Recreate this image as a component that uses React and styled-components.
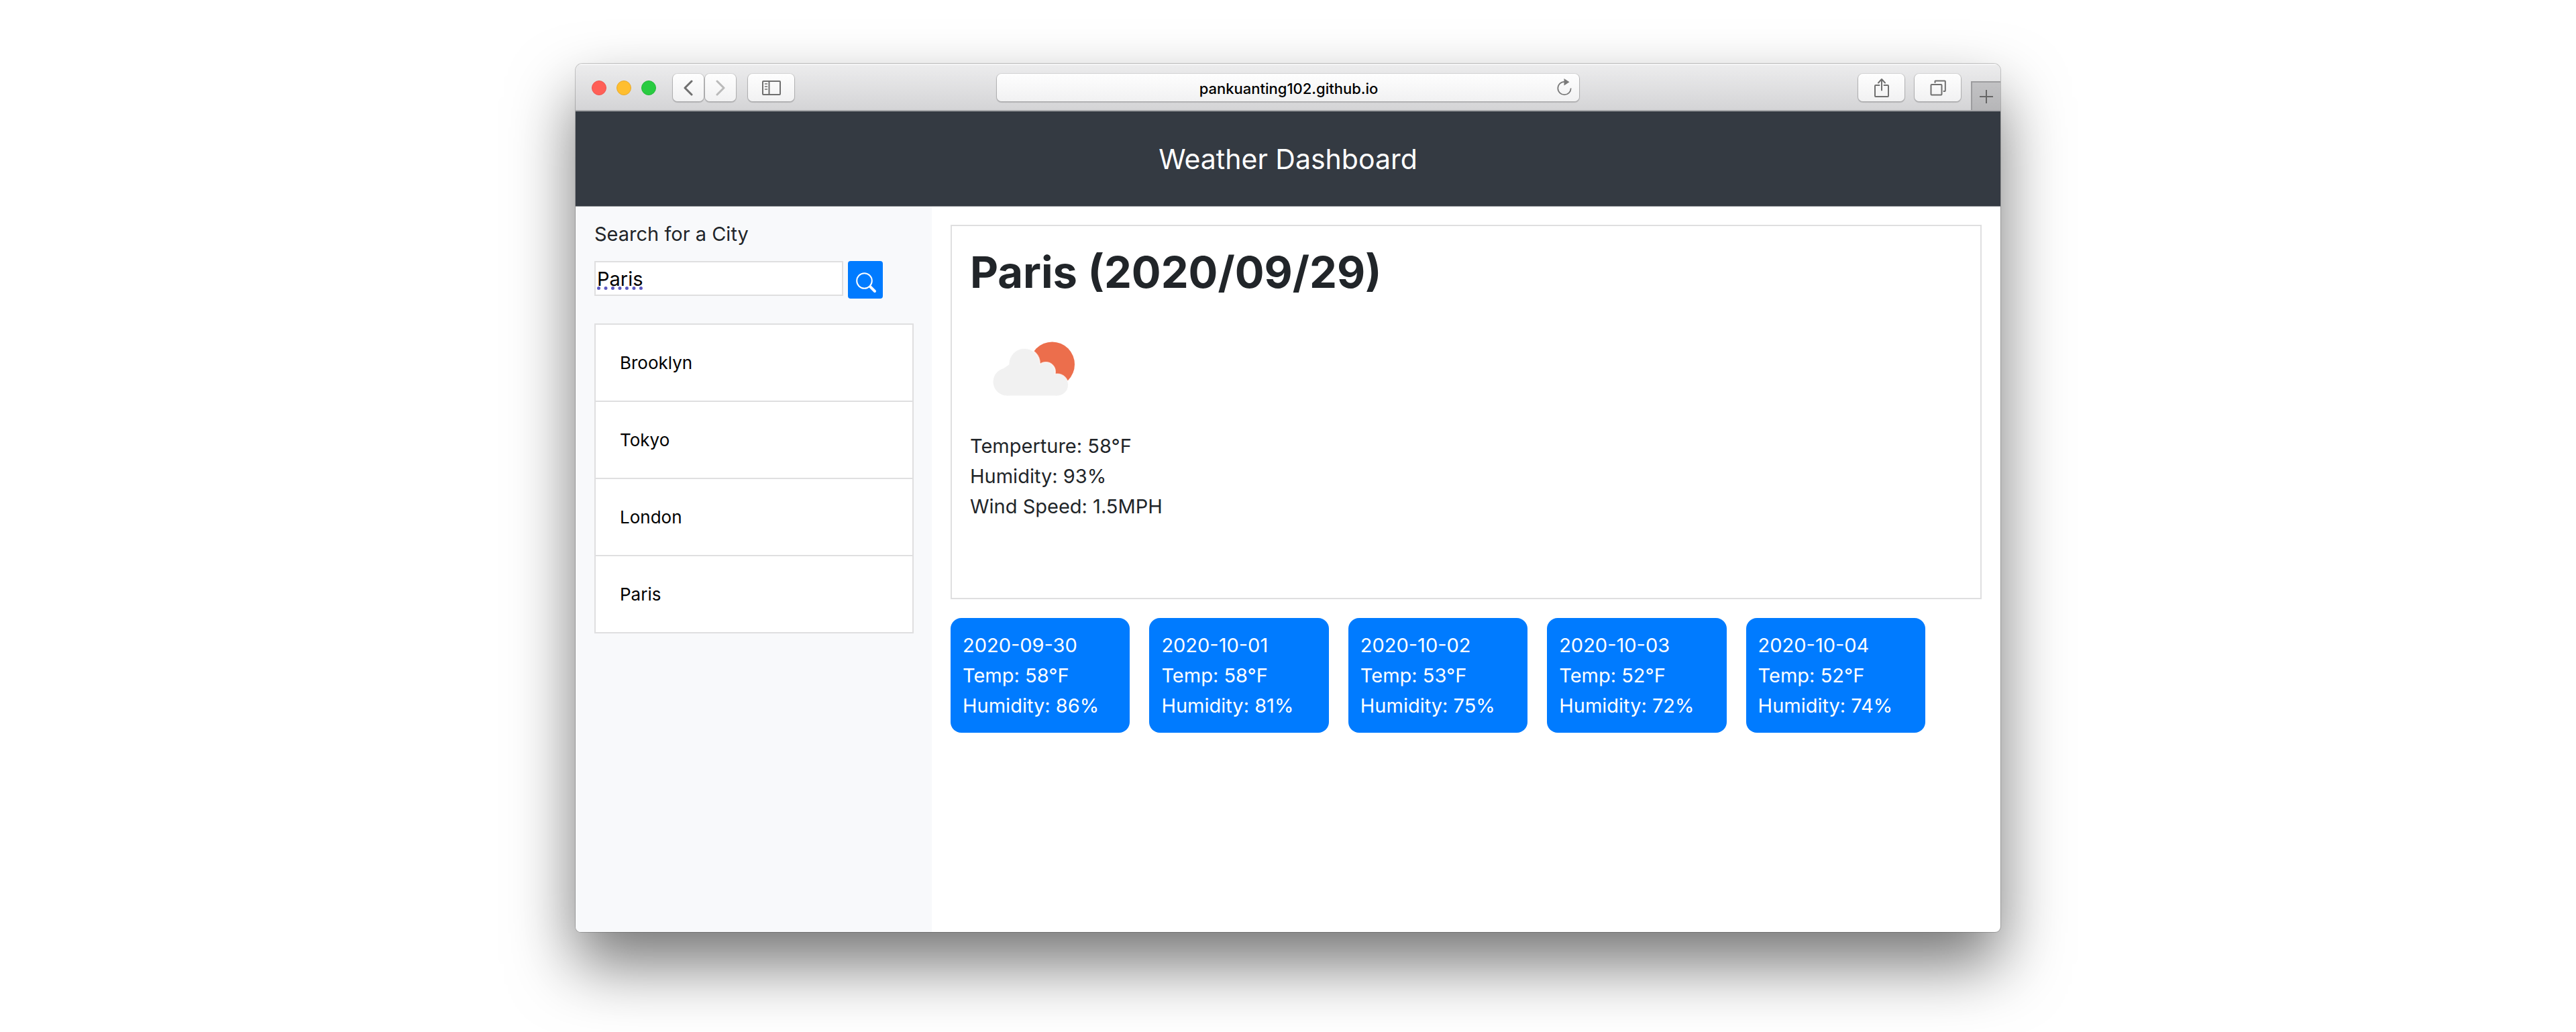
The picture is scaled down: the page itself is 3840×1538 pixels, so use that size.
import React, { useState } from "react";
import styled, { createGlobalStyle } from "styled-components";

const GlobalStyle = createGlobalStyle`
  *, *::before, *::after { box-sizing: border-box; }
  body {
    margin: 0;
    background: #fff;
    color: #212529;
    font-family: Inter, "Liberation Sans", sans-serif;
    font-size: 29px;
    line-height: 45px;
  }
  button, input { font: inherit; color: inherit; margin: 0; }
`;

const Page = styled.div`
  display: flex;
  flex-direction: column;
  align-items: center;
  min-height: 100vh;
  padding: 95px 40px 149px;
`;

const BrowserWindow = styled.div`
  display: flex;
  flex-direction: column;
  flex: 1;
  width: 100%;
  max-width: 2124px;
  border-radius: 10px 10px 8px 8px;
  overflow: hidden;
  background: #fff;
  box-shadow: 0 0 0 1px rgba(0, 0, 0, 0.2), 0 48px 96px rgba(0, 0, 0, 0.54);
`;

/* ---------- browser chrome ---------- */

const Toolbar = styled.div`
  display: grid;
  grid-template-columns: 1fr minmax(300px, 868px) 1fr;
  height: 71px;
  background: linear-gradient(#ececed, #d4d4d6);
  border-top: 2px solid #f4f4f5;
  border-bottom: 2px solid #a3a4a7;
`;

const ToolbarSide = styled.div`
  display: flex;
  align-items: center;
  justify-content: ${(p) => (p.$end ? "flex-end" : "flex-start")};
  gap: ${(p) => (p.$end ? "15px" : "18px")};
  padding-left: 24px;
`;

const TrafficLights = styled.div`
  display: flex;
  gap: 15px;
  margin-right: 7px;
`;

const Light = styled.span`
  width: 22px;
  height: 22px;
  border-radius: 50%;
  background: ${(p) => p.$fill};
  border: 1px solid ${(p) => p.$edge};
`;

const NavPair = styled.div`
  display: flex;
  gap: 2px;
`;

const ToolButton = styled.button`
  display: flex;
  align-items: center;
  justify-content: center;
  width: ${(p) => (p.$narrow ? "46px" : "69px")};
  height: 41px;
  padding: 0;
  border: 0;
  border-radius: 7px;
  background: linear-gradient(#fefefe, #f1f1f2);
  box-shadow: 0 0 0 1px rgba(0, 0, 0, 0.07), 0 1px 1px 1px rgba(0, 0, 0, 0.16);
  color: ${(p) => (p.$faded ? "#bababa" : "#6f6f6f")};
`;

const AddressBar = styled.div`
  display: grid;
  grid-template-columns: 34px 1fr 34px;
  align-items: center;
  align-self: center;
  height: 41px;
  border-radius: 7px;
  background: linear-gradient(#fefefe, #f1f1f2);
  box-shadow: 0 0 0 1px rgba(0, 0, 0, 0.07), 0 1px 1px 1px rgba(0, 0, 0, 0.16);
`;

const AddressInput = styled.input`
  grid-column: 2;
  min-width: 0;
  height: 41px;
  padding: 2px 0 0 2px;
  border: 0;
  outline: 0;
  background: transparent;
  color: #000;
  font-size: 22px;
  font-weight: 500;
  line-height: 30px;
  text-align: center;
`;

const ReloadButton = styled.button`
  display: flex;
  width: 24px;
  height: 30px;
  padding: 0;
  border: 0;
  background: none;
  color: #7a7a7a;
`;

const NewTab = styled.button`
  display: flex;
  align-items: center;
  justify-content: center;
  align-self: flex-end;
  width: 44px;
  height: 43px;
  padding: 0;
  border: solid #9c9c9e;
  border-width: 2px 0 0 2px;
  background: linear-gradient(#c2c2c4, #b6b6b8);
  color: #666;
`;

/* ---------- dashboard ---------- */

const Header = styled.header`
  display: flex;
  align-items: center;
  justify-content: center;
  height: 142px;
  background: #343a42;
  border-bottom: 1px solid #8f9396;
  color: #fff;
`;

const SiteTitle = styled.h1`
  margin: 0;
  font-size: 41px;
  font-weight: 400;
  line-height: 60px;
`;

const Body = styled.div`
  display: grid;
  grid-template-columns: 1fr 3fr;
  flex: 1;
`;

const Sidebar = styled.aside`
  padding: 18px 27px 28px 28px;
  background: #f8f9fb;
`;

const SearchForm = styled.form`
  display: grid;
  grid-template-columns: minmax(0, 371px) 52px;
  align-items: start;
  column-gap: 7px;
  row-gap: 18px;
`;

const SearchLabel = styled.label`
  grid-column: 1 / -1;
`;

const SearchInput = styled.input`
  width: 100%;
  height: 52px;
  padding: 0 2px;
  border: 2px solid #dfdfe0;
  border-radius: 0;
  outline: 0;
  background: #fff;
  color: #000;
  text-decoration: underline dotted 5px #5a58c0;
  text-decoration-skip-ink: none;
  text-underline-offset: 1px;
`;

const SearchButton = styled.button`
  display: flex;
  align-items: center;
  justify-content: center;
  height: 56px;
  padding: 8px 0 0 2px;
  border: 0;
  border-radius: 4px;
  background: #007bff;
  color: #fff;
`;

const CityList = styled.ul`
  margin: 37px 0 0;
  padding: 0;
  list-style: none;
  border: solid #dfdfe0;
  border-width: 2px 2px 0;
`;

const CityButton = styled.button`
  display: block;
  width: 100%;
  padding: 35px 36px 34px;
  border: 0;
  border-bottom: 2px solid #dfdfe0;
  background: #fff;
  color: #000;
  font-size: 26px;
  line-height: 44px;
  text-align: left;
`;

const Main = styled.main`
  display: flex;
  flex-direction: column;
  gap: 28px;
  padding: 27px 28px;
`;

const CurrentPanel = styled.section`
  min-height: 558px;
  padding: 29px 27px;
  border: 2px solid #dfdfe0;
`;

const CurrentTitle = styled.h2`
  margin: 0;
  font-size: 65px;
  font-weight: 700;
  line-height: 80px;
`;

const WeatherIcon = styled.svg`
  display: block;
  width: 185px;
  height: 185px;
  margin-bottom: 11px;
`;

const Reading = styled.p`
  margin: 0;
`;

const Forecast = styled.section`
  display: grid;
  grid-template-columns: repeat(5, 1fr);
  gap: 29px;
  padding-right: 84px;
`;

const DayCard = styled.article`
  padding: 18px;
  border-radius: 16px;
  background: #007bff;
  color: #fff;
`;

/* ---------- icons ---------- */

const Stroke = ({ w, h, sw = 2, children }) => (
  <svg
    width={w}
    height={h}
    viewBox={`0 0 ${w} ${h}`}
    fill="none"
    stroke="currentColor"
    strokeWidth={sw}
    strokeLinecap="round"
    strokeLinejoin="round"
    aria-hidden="true"
  >
    {children}
  </svg>
);

const BackIcon = () => (
  <Stroke w={16} h={24} sw={3}>
    <path d="M13 2 L3 12 L13 22" />
  </Stroke>
);

const ForwardIcon = () => (
  <Stroke w={16} h={24} sw={3}>
    <path d="M3 2 L13 12 L3 22" />
  </Stroke>
);

const SidebarIcon = () => (
  <Stroke w={28} h={22}>
    <rect x="1" y="1" width="26" height="20" rx="1" />
    <path d="M10.5 1 V21" />
    <path d="M4.5 5 H7.5 M4.5 9 H7.5 M4.5 13 H7.5" strokeWidth="1.6" />
  </Stroke>
);

const ShareIcon = () => (
  <Stroke w={22} h={30}>
    <path d="M7.5 11 H2 Q1 11 1 12 V27 Q1 28 2 28 H20 Q21 28 21 27 V12 Q21 11 20 11 H14.5" />
    <path d="M11 18.5 V2.5 M6 7.5 L11 2 L16 7.5" />
  </Stroke>
);

const TabsIcon = () => (
  <Stroke w={24} h={24}>
    <rect x="1.5" y="7" width="16" height="15.5" rx="1" />
    <path d="M7.5 4 V2 Q7.5 1.5 8 1.5 H22 Q22.8 1.5 22.8 2.3 V16 Q22.8 17 22 17 H20.5" />
  </Stroke>
);

const PlusIcon = () => (
  <Stroke w={22} h={22} sw={2}>
    <path d="M11 1 V21 M1 11 H21" strokeLinecap="butt" />
  </Stroke>
);

const ReloadIcon = () => (
  <Stroke w={24} h={30} sw={1.8}>
    <path d="M21.7 15.5 A9.7 9.7 0 1 1 12 5.8" strokeLinecap="butt" />
    <path d="M11.5 1 L19.5 6.2 L11.5 11.6 Z" fill="currentColor" stroke="none" />
  </Stroke>
);

const SearchIcon = () => (
  <Stroke w={32} h={32}>
    <circle cx="13.5" cy="13.5" r="11.3" />
    <path d="M22.5 22.5 L29 29" strokeWidth="4" />
  </Stroke>
);

const FewClouds = () => (
  <WeatherIcon viewBox="0 0 185 185" role="img" aria-label="Few clouds">
    <circle cx="122.500" cy="97" r="33.500" fill="#ec6e4c" />
    <g stroke="#fff" strokeOpacity="0.75" strokeWidth="2">
      <circle cx="81" cy="96" r="23" fill="#f1f1f1" />
      <circle cx="113" cy="108" r="14" fill="#f1f1f1" />
      <circle cx="130" cy="127.500" r="16" fill="#f1f1f1" />
    </g>
    <g fill="#f1f1f1">
      <circle cx="81" cy="97" r="22.500" />
      <circle cx="55" cy="123" r="20.500" />
      <circle cx="112.500" cy="108" r="13.500" />
      <circle cx="130" cy="127.500" r="16" />
      <path d="M59 97 H103 L125 112 L130 143.500 H55 L50 103 Z" />
    </g>
  </WeatherIcon>
);

/* ---------- data ---------- */

const cities = ["Brooklyn", "Tokyo", "London", "Paris"];

const forecast = [
  { date: "2020-09-30", temp: 58, humidity: 86 },
  { date: "2020-10-01", temp: 58, humidity: 81 },
  { date: "2020-10-02", temp: 53, humidity: 75 },
  { date: "2020-10-03", temp: 52, humidity: 72 },
  { date: "2020-10-04", temp: 52, humidity: 74 },
];

export default function App() {
  const [query, setQuery] = useState("Paris");

  return (
    <>
      <GlobalStyle />
      <Page>
        <BrowserWindow>
          <Toolbar>
            <ToolbarSide>
              <TrafficLights>
                <Light $fill="#ff5f57" $edge="#ee544e" />
                <Light $fill="#ffbe2f" $edge="#e9a92a" />
                <Light $fill="#29cb41" $edge="#22b838" />
              </TrafficLights>
              <NavPair>
                <ToolButton $narrow aria-label="Back">
                  <BackIcon />
                </ToolButton>
                <ToolButton $narrow $faded aria-label="Forward">
                  <ForwardIcon />
                </ToolButton>
              </NavPair>
              <ToolButton aria-label="Show sidebar">
                <SidebarIcon />
              </ToolButton>
            </ToolbarSide>
            <AddressBar>
              <AddressInput aria-label="Address" defaultValue="pankuanting102.github.io" />
              <ReloadButton aria-label="Reload">
                <ReloadIcon />
              </ReloadButton>
            </AddressBar>
            <ToolbarSide $end>
              <ToolButton aria-label="Share">
                <ShareIcon />
              </ToolButton>
              <ToolButton aria-label="Show all tabs">
                <TabsIcon />
              </ToolButton>
              <NewTab aria-label="New tab">
                <PlusIcon />
              </NewTab>
            </ToolbarSide>
          </Toolbar>

          <Header>
            <SiteTitle>Weather Dashboard</SiteTitle>
          </Header>

          <Body>
            <Sidebar>
              <SearchForm onSubmit={(e) => e.preventDefault()}>
                <SearchLabel htmlFor="city">Search for a City</SearchLabel>
                <SearchInput
                  id="city"
                  type="text"
                  value={query}
                  onChange={(e) => setQuery(e.target.value)}
                />
                <SearchButton type="submit" aria-label="Search">
                  <SearchIcon />
                </SearchButton>
              </SearchForm>
              <CityList>
                {cities.map((city) => (
                  <li key={city}>
                    <CityButton type="button" onClick={() => setQuery(city)}>
                      {city}
                    </CityButton>
                  </li>
                ))}
              </CityList>
            </Sidebar>

            <Main>
              <CurrentPanel>
                <CurrentTitle>Paris (2020/09/29)</CurrentTitle>
                <FewClouds />
                <Reading>Temperture: 58°F</Reading>
                <Reading>Humidity: 93%</Reading>
                <Reading>Wind Speed: 1.5MPH</Reading>
              </CurrentPanel>
              <Forecast>
                {forecast.map((day) => (
                  <DayCard key={day.date}>
                    <Reading>{day.date}</Reading>
                    <Reading>{`Temp: ${day.temp}°F`}</Reading>
                    <Reading>{`Humidity: ${day.humidity}%`}</Reading>
                  </DayCard>
                ))}
              </Forecast>
            </Main>
          </Body>
        </BrowserWindow>
      </Page>
    </>
  );
}
